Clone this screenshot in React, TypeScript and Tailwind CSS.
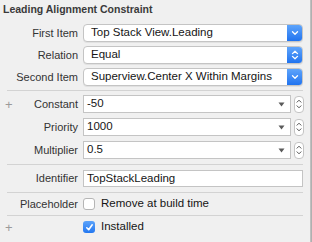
const font = { fontFamily: '"Liberation Sans", Arial, sans-serif' };

function ChevronDown() {
  return (
    <svg width="8" height="6" viewBox="0 0 8 6">
      <path d="M1.5 1.8 L4 4.2 L6.5 1.8" fill="none" stroke="#fff" strokeWidth="1.3" strokeLinecap="round" strokeLinejoin="round" />
    </svg>
  );
}

function ChevronUpDown() {
  return (
    <svg width="8" height="12" viewBox="0 0 8 12">
      <path d="M1.5 4.6 L4 2.2 L6.5 4.6" fill="none" stroke="#fff" strokeWidth="1.3" strokeLinecap="round" strokeLinejoin="round" />
      <path d="M1.5 7.4 L4 9.8 L6.5 7.4" fill="none" stroke="#fff" strokeWidth="1.3" strokeLinecap="round" strokeLinejoin="round" />
    </svg>
  );
}

function Popup({ value, updown }: { value: string; updown?: boolean }) {
  return (
    <div className="flex h-[18px] w-[220px] items-stretch overflow-hidden rounded-[4px] border border-[#c4c4c4] bg-white shadow-[0_1px_0_rgba(0,0,0,0.06)]">
      <div className="flex flex-1 items-center pl-[7px] text-[11.5px] text-[#151515]">{value}</div>
      <div className="flex w-[15px] items-center justify-center bg-gradient-to-b from-[#5ea4fb] to-[#1f73ef]">
        {updown ? <ChevronUpDown /> : <ChevronDown />}
      </div>
    </div>
  );
}

function Stepper() {
  return (
    <div className="flex h-[17px] w-[10px] flex-col items-center justify-center rounded-[4px] border border-[#c4c4c4] bg-white">
      <svg width="6" height="12" viewBox="0 0 6 12">
        <path d="M1 4.2 L3 2.2 L5 4.2" fill="none" stroke="#555" strokeWidth="1" strokeLinecap="round" strokeLinejoin="round" />
        <path d="M1 7.8 L3 9.8 L5 7.8" fill="none" stroke="#555" strokeWidth="1" strokeLinecap="round" strokeLinejoin="round" />
      </svg>
    </div>
  );
}

function Combo({ value }: { value: string }) {
  return (
    <div className="flex items-center gap-[3px]">
      <div className="flex h-[18px] w-[208px] items-center justify-between border border-[#c4c4c4] bg-white pl-[3px] pr-[5px] text-[11.5px] text-[#151515]">
        <span>{value}</span>
        <svg width="7" height="5" viewBox="0 0 7 5">
          <path d="M0.5 0.5 L6.5 0.5 L3.5 4.5 Z" fill="#5a5a5a" />
        </svg>
      </div>
      <Stepper />
    </div>
  );
}

function Checkbox({ checked }: { checked?: boolean }) {
  if (checked) {
    return (
      <div className="flex h-[12px] w-[12px] items-center justify-center rounded-[3px] bg-gradient-to-b from-[#5ba3fa] to-[#2277f0]">
        <svg width="9" height="9" viewBox="0 0 9 9">
          <path d="M1.8 4.8 L3.7 6.7 L7.2 1.8" fill="none" stroke="#fff" strokeWidth="1.6" strokeLinecap="round" strokeLinejoin="round" />
        </svg>
      </div>
    );
  }
  return <div className="h-[12px] w-[12px] rounded-[3px] border border-[#b5b5b5] bg-white" />;
}

function Row({ label, plus, children, h = "h-[18px]" }: { label?: string; plus?: boolean; children: React.ReactNode; h?: string }) {
  return (
    <div className={`relative flex items-center ${h}`}>
      {plus && <span className="absolute left-[5px] text-[13px] leading-none text-[#9a9a9a]">+</span>}
      <div className="w-[79px] pr-[1px] text-right text-[11px] text-[#333]">{label}</div>
      <div className="ml-[4px]">{children}</div>
    </div>
  );
}

function Sep() {
  return <div className="ml-[7px] h-px w-[296px] bg-[#d3d3d3]" />;
}

export default function App() {
  return (
    <div className="flex h-[242px] w-[312px] bg-[#f0f0f0]" style={font}>
      <div className="flex w-[310px] flex-col">
        <div className="flex h-[20px] items-center pl-[3px] text-[10.5px] font-bold text-[#3a3a3a]">
          Leading Alignment Constraint
        </div>
        <div className="mt-[4px] flex flex-col gap-[4px]">
          <Row label="First Item"><Popup value="Top Stack View.Leading" /></Row>
          <Row label="Relation"><Popup value="Equal" updown /></Row>
          <Row label="Second Item"><Popup value="Superview.Center X Within Margins" /></Row>
        </div>
        <div className="mt-[4px]"><Sep /></div>
        <div className="mt-[4px] flex flex-col gap-[5px]">
          <Row label="Constant" plus><Combo value="-50" /></Row>
          <Row label="Priority"><Combo value="1000" /></Row>
          <Row label="Multiplier"><Combo value="0.5" /></Row>
        </div>
        <div className="mt-[5px]"><Sep /></div>
        <div className="mt-[5px]">
          <Row label="Identifier" h="h-[17px]">
            <div className="flex h-[17px] w-[220px] items-center border border-[#c4c4c4] bg-white pl-[3px] text-[11.5px] text-[#151515]">
              TopStackLeading
            </div>
          </Row>
        </div>
        <div className="mt-[5px]"><Sep /></div>
        <Row label="Placeholder" h="h-[22px]">
          <div className="flex items-center gap-[6px] text-[11.5px] text-[#151515]">
            <Checkbox />
            <span>Remove at build time</span>
          </div>
        </Row>
        <Sep />
        <Row label="" plus h="h-[22px]">
          <div className="flex items-center gap-[6px] text-[11.5px] text-[#151515]">
            <Checkbox checked />
            <span>Installed</span>
          </div>
        </Row>
      </div>
      <div className="w-[2px] bg-gradient-to-r from-[#c8c8c8] to-[#a8a8a8]" />
    </div>
  );
}
